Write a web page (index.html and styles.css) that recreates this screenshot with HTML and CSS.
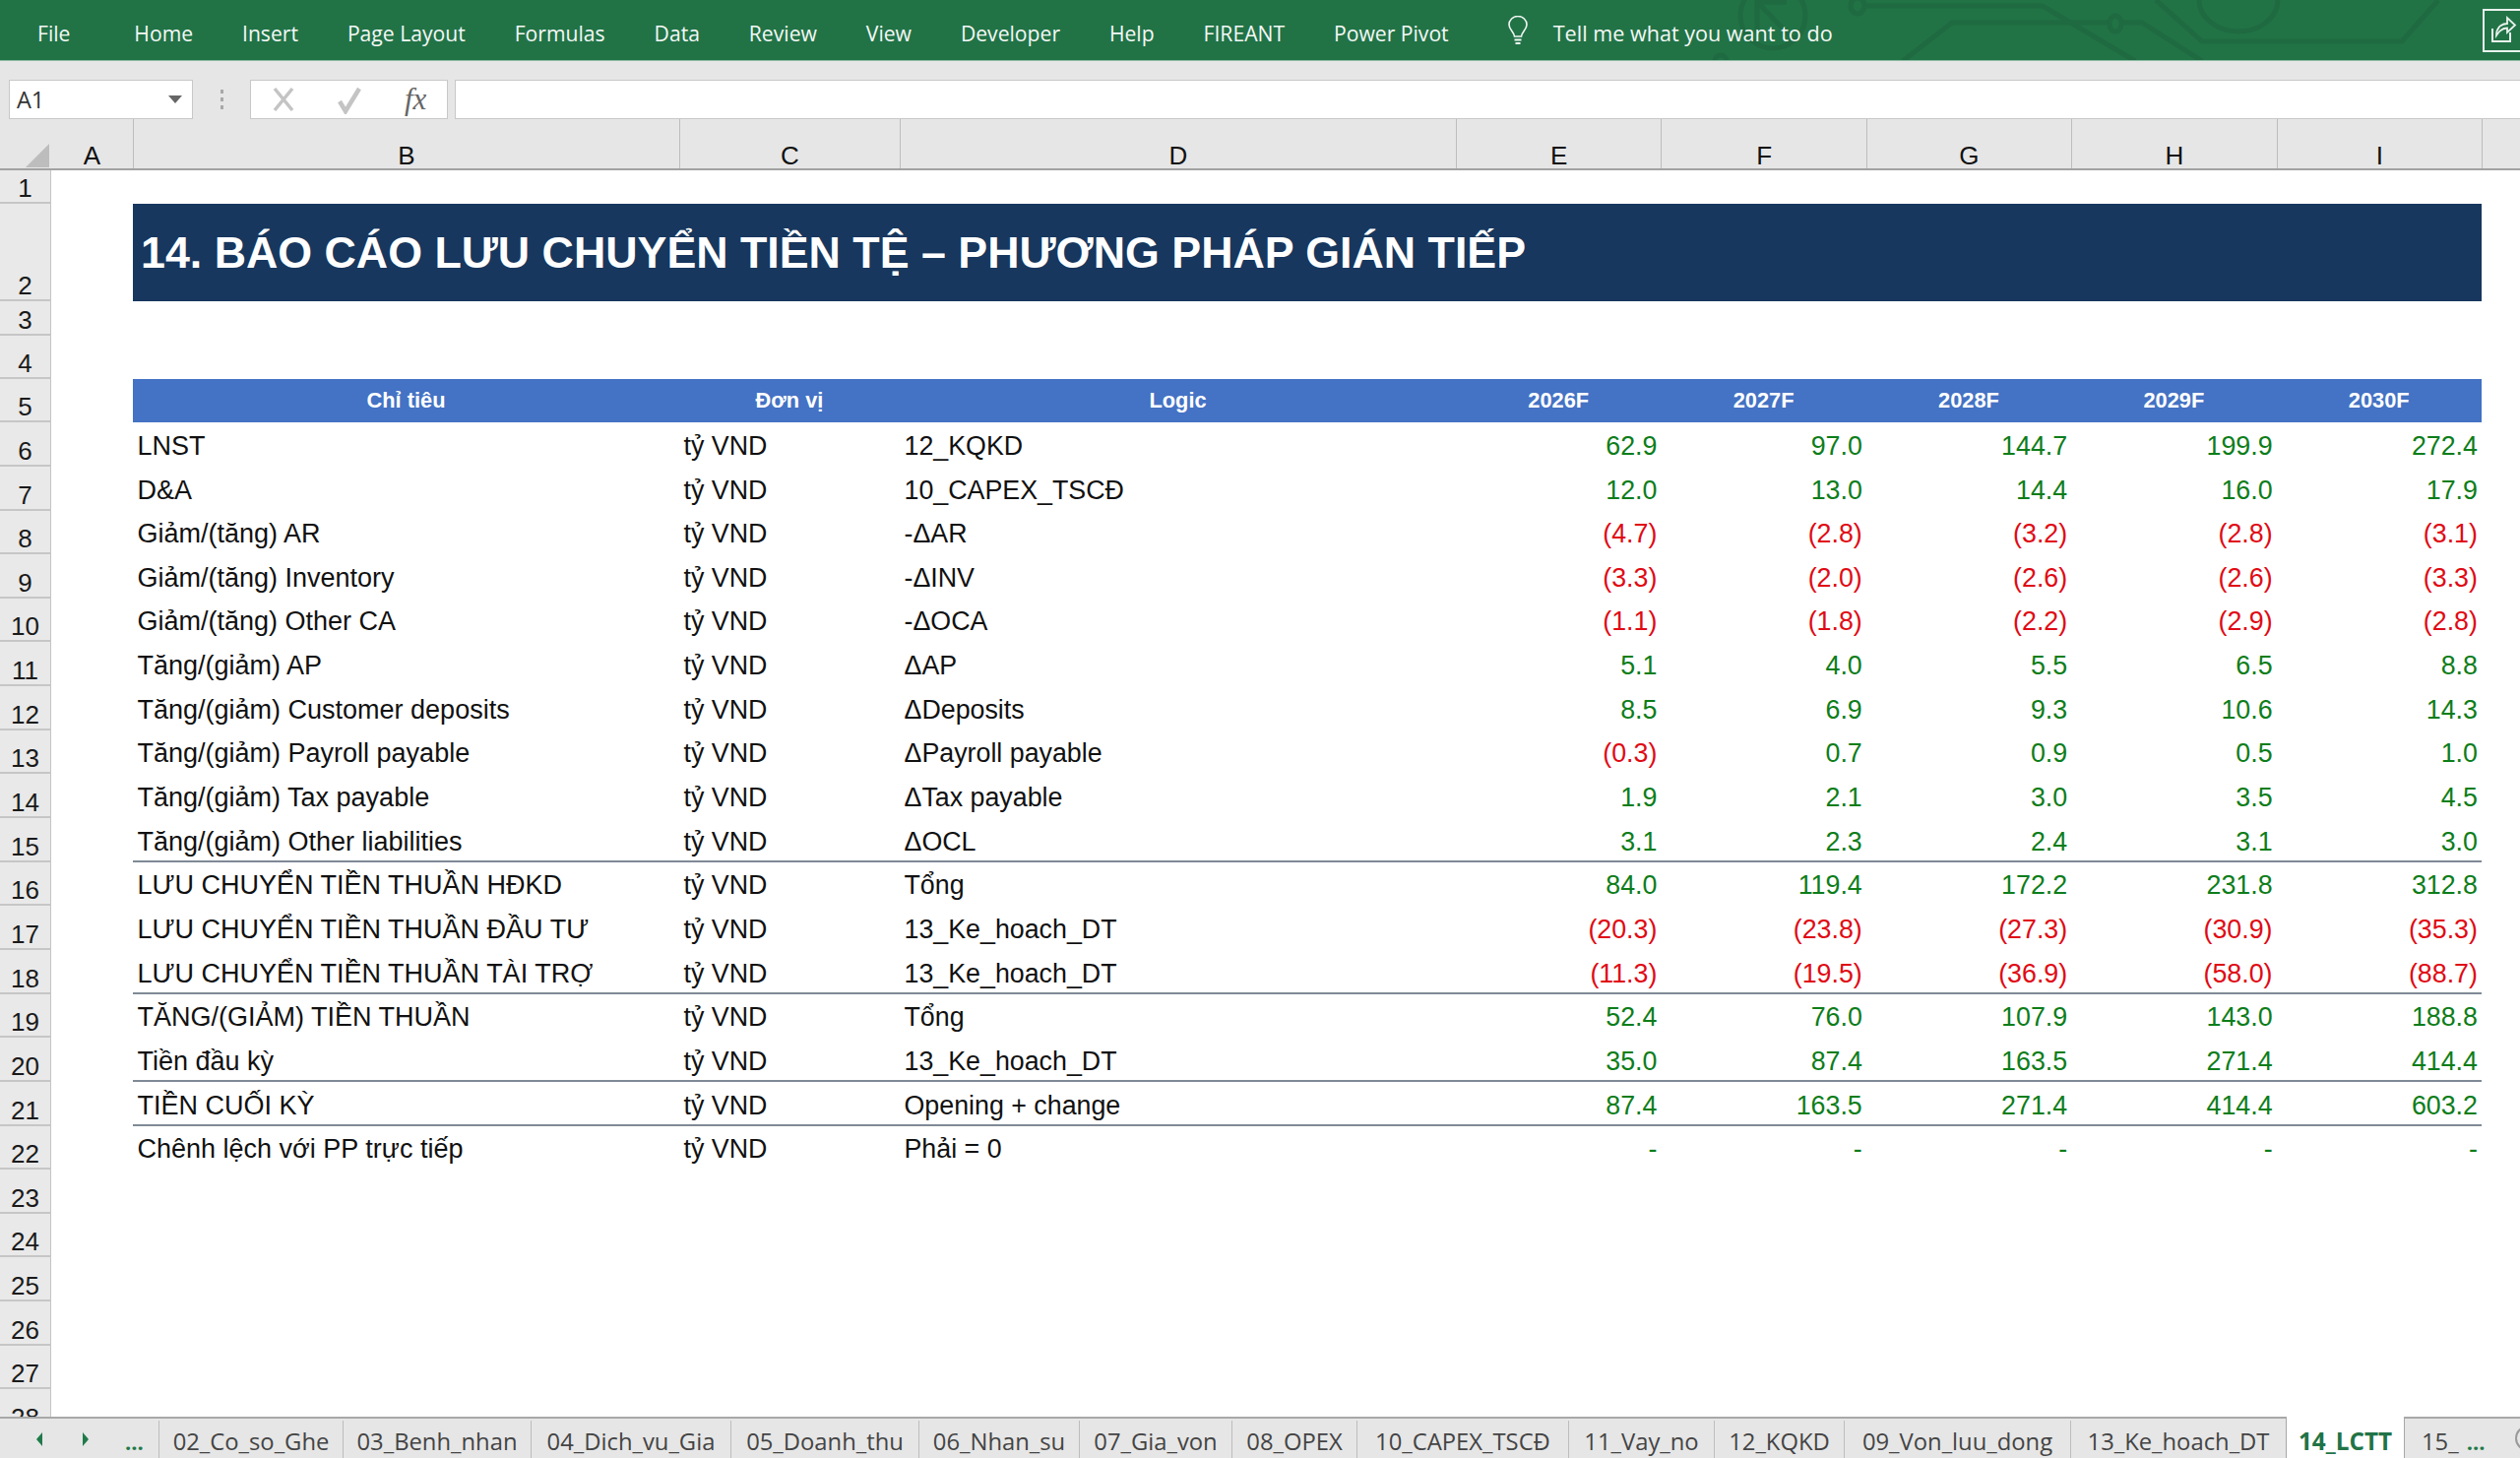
FILE: index.html
```html
<!DOCTYPE html>
<html lang="vi">
<head>
<meta charset="utf-8">
<title>14_LCTT</title>
<link rel="stylesheet" href="styles.css">
</head>
<body>
<div class="app">
  <header class="ribbon">
    <svg class="circuit" viewBox="0 0 2560 62" width="2560" height="62" aria-hidden="true">
      <g fill="none" stroke="#1f6a41" stroke-width="5">
        <circle cx="1801" cy="16" r="33"/>
        <path d="M1785 -4 L1785 34 M1785 2 H1815 M1785 2 L1822 40"/>
        <ellipse cx="1887" cy="6" rx="7" ry="8"/>
        <path d="M1894 6 H2075 L2169 62"/>
        <path d="M1933 62 L1983 23 H2142"/>
        <ellipse cx="2149" cy="24" rx="6" ry="8"/>
        <path d="M2156 23 H2176 L2237 62"/>
        <path d="M2234 0 A40 32 0 0 0 2314 0"/>
        <path d="M2190 0 L2237 42 H2440 L2477 0"/>
        <circle cx="1748" cy="62" r="6"/>
      </g>
    </svg>
    <nav class="menu">
      <span class="menu-item menu-file">File</span>
      <span class="menu-item">Home</span>
      <span class="menu-item">Insert</span>
      <span class="menu-item">Page Layout</span>
      <span class="menu-item">Formulas</span>
      <span class="menu-item">Data</span>
      <span class="menu-item">Review</span>
      <span class="menu-item">View</span>
      <span class="menu-item">Developer</span>
      <span class="menu-item">Help</span>
      <span class="menu-item">FIREANT</span>
      <span class="menu-item">Power Pivot</span>
    </nav>
    <div class="tell">
      <svg class="bulb" viewBox="0 0 24 30" width="24" height="30" aria-hidden="true">
        <path d="M8.5 21 C8 16 3 14 3 9 A9 8.5 0 0 1 21 9 C21 14 16 16 15.5 21 Z" fill="none" stroke="#f2f7f4" stroke-width="1.6"/>
        <path d="M8.5 24.5 H15.5 M9.5 28 H14.5" stroke="#f2f7f4" stroke-width="2"/>
      </svg>
      <span>Tell me what you want to do</span>
    </div>
    <div class="share">
      <svg viewBox="0 0 38 44" width="38" height="44" aria-hidden="true">
        <path d="M10 20 V33 H28 V24" fill="none" stroke="#e9f2ed" stroke-width="2"/>
        <path d="M14 27 C14 20 18 15 25 15 V9 L33 16.500 L25 24 V19.500 C20 19.500 17 22 14 27 Z" fill="none" stroke="#e9f2ed" stroke-width="1.800"/>
      </svg>
    </div>
  </header>

  <section class="formula-bar">
    <div class="name-box"><span>A1</span><i class="caret"></i></div>
    <div class="grip"><i></i><i></i><i></i></div>
    <div class="fx-box">
      <svg viewBox="0 0 24 30" width="24" height="30" aria-hidden="true"><path d="M3 4 L21 26 M21 4 L3 26" stroke="#c4c4c4" stroke-width="3.500"/></svg>
      <svg viewBox="0 0 26 30" width="26" height="30" aria-hidden="true"><path d="M3 17 L9 27 L23 4" fill="none" stroke="#c4c4c4" stroke-width="4.500"/></svg>
      <span class="fx">fx</span>
    </div>
    <div class="formula-input"></div>
  </section>

  <section class="col-headers">
    <div class="corner"><i></i></div>
    <div class="col col-a">A</div>
    <div class="col col-b">B</div>
    <div class="col col-c">C</div>
    <div class="col col-d">D</div>
    <div class="col col-n">E</div>
    <div class="col col-n">F</div>
    <div class="col col-n">G</div>
    <div class="col col-n">H</div>
    <div class="col col-n">I</div>
  </section>

  <main class="sheet">
    <div class="row h1"><div class="rn">1</div></div>
    <div class="row h2"><div class="rn">2</div><div class="gap-a"></div><div class="title">14. BÁO CÁO LƯU CHUYỂN TIỀN TỆ – PHƯƠNG PHÁP GIÁN TIẾP</div></div>
    <div class="row h3"><div class="rn">3</div></div>
    <div class="row h4"><div class="rn">4</div></div>
    <div class="row"><div class="rn">5</div><div class="gap-a"></div><div class="body head"><span>Chỉ tiêu</span><span>Đơn vị</span><span>Logic</span><span>2026F</span><span>2027F</span><span>2028F</span><span>2029F</span><span>2030F</span></div></div>
    <div class="row"><div class="rn">6</div><div class="gap-a"></div><div class="body"><span>LNST</span><span>tỷ VND</span><span>12_KQKD</span><b>62.9</b><b>97.0</b><b>144.7</b><b>199.9</b><b>272.4</b></div></div>
    <div class="row"><div class="rn">7</div><div class="gap-a"></div><div class="body"><span>D&amp;A</span><span>tỷ VND</span><span>10_CAPEX_TSCĐ</span><b>12.0</b><b>13.0</b><b>14.4</b><b>16.0</b><b>17.9</b></div></div>
    <div class="row"><div class="rn">8</div><div class="gap-a"></div><div class="body"><span>Giảm/(tăng) AR</span><span>tỷ VND</span><span>-ΔAR</span><b class="neg">(4.7)</b><b class="neg">(2.8)</b><b class="neg">(3.2)</b><b class="neg">(2.8)</b><b class="neg">(3.1)</b></div></div>
    <div class="row"><div class="rn">9</div><div class="gap-a"></div><div class="body"><span>Giảm/(tăng) Inventory</span><span>tỷ VND</span><span>-ΔINV</span><b class="neg">(3.3)</b><b class="neg">(2.0)</b><b class="neg">(2.6)</b><b class="neg">(2.6)</b><b class="neg">(3.3)</b></div></div>
    <div class="row"><div class="rn">10</div><div class="gap-a"></div><div class="body"><span>Giảm/(tăng) Other CA</span><span>tỷ VND</span><span>-ΔOCA</span><b class="neg">(1.1)</b><b class="neg">(1.8)</b><b class="neg">(2.2)</b><b class="neg">(2.9)</b><b class="neg">(2.8)</b></div></div>
    <div class="row"><div class="rn">11</div><div class="gap-a"></div><div class="body"><span>Tăng/(giảm) AP</span><span>tỷ VND</span><span>ΔAP</span><b>5.1</b><b>4.0</b><b>5.5</b><b>6.5</b><b>8.8</b></div></div>
    <div class="row"><div class="rn">12</div><div class="gap-a"></div><div class="body"><span>Tăng/(giảm) Customer deposits</span><span>tỷ VND</span><span>ΔDeposits</span><b>8.5</b><b>6.9</b><b>9.3</b><b>10.6</b><b>14.3</b></div></div>
    <div class="row"><div class="rn">13</div><div class="gap-a"></div><div class="body"><span>Tăng/(giảm) Payroll payable</span><span>tỷ VND</span><span>ΔPayroll payable</span><b class="neg">(0.3)</b><b>0.7</b><b>0.9</b><b>0.5</b><b>1.0</b></div></div>
    <div class="row"><div class="rn">14</div><div class="gap-a"></div><div class="body"><span>Tăng/(giảm) Tax payable</span><span>tỷ VND</span><span>ΔTax payable</span><b>1.9</b><b>2.1</b><b>3.0</b><b>3.5</b><b>4.5</b></div></div>
    <div class="row"><div class="rn">15</div><div class="gap-a"></div><div class="body ruled"><span>Tăng/(giảm) Other liabilities</span><span>tỷ VND</span><span>ΔOCL</span><b>3.1</b><b>2.3</b><b>2.4</b><b>3.1</b><b>3.0</b></div></div>
    <div class="row"><div class="rn">16</div><div class="gap-a"></div><div class="body"><span>LƯU CHUYỂN TIỀN THUẦN HĐKD</span><span>tỷ VND</span><span>Tổng</span><b>84.0</b><b>119.4</b><b>172.2</b><b>231.8</b><b>312.8</b></div></div>
    <div class="row"><div class="rn">17</div><div class="gap-a"></div><div class="body"><span>LƯU CHUYỂN TIỀN THUẦN ĐẦU TƯ</span><span>tỷ VND</span><span>13_Ke_hoach_DT</span><b class="neg">(20.3)</b><b class="neg">(23.8)</b><b class="neg">(27.3)</b><b class="neg">(30.9)</b><b class="neg">(35.3)</b></div></div>
    <div class="row"><div class="rn">18</div><div class="gap-a"></div><div class="body ruled"><span>LƯU CHUYỂN TIỀN THUẦN TÀI TRỢ</span><span>tỷ VND</span><span>13_Ke_hoach_DT</span><b class="neg">(11.3)</b><b class="neg">(19.5)</b><b class="neg">(36.9)</b><b class="neg">(58.0)</b><b class="neg">(88.7)</b></div></div>
    <div class="row"><div class="rn">19</div><div class="gap-a"></div><div class="body"><span>TĂNG/(GIẢM) TIỀN THUẦN</span><span>tỷ VND</span><span>Tổng</span><b>52.4</b><b>76.0</b><b>107.9</b><b>143.0</b><b>188.8</b></div></div>
    <div class="row"><div class="rn">20</div><div class="gap-a"></div><div class="body ruled"><span>Tiền đầu kỳ</span><span>tỷ VND</span><span>13_Ke_hoach_DT</span><b>35.0</b><b>87.4</b><b>163.5</b><b>271.4</b><b>414.4</b></div></div>
    <div class="row"><div class="rn">21</div><div class="gap-a"></div><div class="body ruled"><span>TIỀN CUỐI KỲ</span><span>tỷ VND</span><span>Opening + change</span><b>87.4</b><b>163.5</b><b>271.4</b><b>414.4</b><b>603.2</b></div></div>
    <div class="row"><div class="rn">22</div><div class="gap-a"></div><div class="body"><span>Chênh lệch với PP trực tiếp</span><span>tỷ VND</span><span>Phải = 0</span><b>-</b><b>-</b><b>-</b><b>-</b><b>-</b></div></div>
    <div class="row"><div class="rn">23</div></div>
    <div class="row"><div class="rn">24</div></div>
    <div class="row"><div class="rn">25</div></div>
    <div class="row"><div class="rn">26</div></div>
    <div class="row"><div class="rn">27</div></div>
    <div class="row"><div class="rn">28</div></div>
  </main>

  <footer class="tabs">
    <div class="tab-nav">
      <svg viewBox="0 0 10 18" width="10" height="18" aria-hidden="true"><path d="M8 2 L2 9 L8 16 Z" fill="#1f7a4a"/></svg>
      <svg viewBox="0 0 10 18" width="10" height="18" aria-hidden="true"><path d="M2 2 L8 9 L2 16 Z" fill="#1f7a4a"/></svg>
      <span class="more">...</span>
    </div>
    <div class="tab">02_Co_so_Ghe</div>
    <div class="tab">03_Benh_nhan</div>
    <div class="tab">04_Dich_vu_Gia</div>
    <div class="tab">05_Doanh_thu</div>
    <div class="tab">06_Nhan_su</div>
    <div class="tab">07_Gia_von</div>
    <div class="tab">08_OPEX</div>
    <div class="tab">10_CAPEX_TSCĐ</div>
    <div class="tab">11_Vay_no</div>
    <div class="tab">12_KQKD</div>
    <div class="tab">09_Von_luu_dong</div>
    <div class="tab">13_Ke_hoach_DT</div>
    <div class="tab active">14_LCTT</div>
    <div class="tab last">15_ <span class="more">...</span><i class="add"></i></div>
  </footer>
</div>
</body>
</html>
```

FILE: styles.css
```css
* { box-sizing: border-box; }
html, body { margin: 0; padding: 0; background: #fff; }
body { width: 2560px; height: 1481px; overflow: hidden; font-family: "Liberation Sans", Arial, sans-serif; }
.app { width: 2560px; height: 1481px; display: flex; flex-direction: column; overflow: hidden; }

/* Ribbon */
.ribbon { position: relative; flex: 0 0 62px; display: flex; align-items: center; background: #217346; border-bottom: 1px solid #8dbba3; color: #f4f8f6; font-family: "Open Sans", sans-serif; font-size: 21.150px; padding-left: 38px; overflow: hidden; }
.circuit { position: absolute; left: 0; top: 0; }
.menu { position: relative; display: flex; gap: 49.900px; margin-top: 6px; }
.menu-file { margin-right: 15px; }
.tell { position: relative; display: flex; align-items: center; gap: 24px; margin-left: 58px; margin-top: 6px; font-size: 21.600px; }
.bulb { display: block; margin-top: -5px; }
.share { position: relative; margin-left: auto; width: 38px; height: 44px; border: 2px solid #e9f2ed; border-right: 0; margin-right: 0; }
.share svg { display: block; margin: -2px 0 0 -2px; }

/* Formula bar */
.formula-bar { flex: 0 0 59px; display: flex; align-items: flex-end; background: #e6e6e6; padding-left: 9px; }
.name-box, .fx-box, .formula-input { height: 40px; background: #fff; border: 1px solid #c8c8c8; }
.name-box { width: 187px; display: flex; align-items: center; justify-content: space-between; padding: 0 10px 0 7px; font-family: "Open Sans", sans-serif; font-size: 23.500px; color: #333; }
.caret { width: 0; height: 0; border-left: 7px solid transparent; border-right: 7px solid transparent; border-top: 8px solid #666; }
.grip { width: 58px; height: 40px; display: flex; flex-direction: column; align-items: center; justify-content: center; gap: 4px; }
.grip i { width: 3px; height: 4px; background: #a8a8a8; }
.fx-box { width: 201px; display: flex; align-items: center; gap: 42px; padding-left: 21px; }
.fx { font-family: "Liberation Serif", serif; font-style: italic; font-size: 31px; color: #666; margin-left: 1px; }
.formula-input { flex: 1; margin-left: 7px; border-right: 0; }

/* Column headers */
.col-headers { flex: 0 0 52px; display: flex; background: #e6e6e6; border-bottom: 2px solid #a2a2a2; }
.corner { position: relative; width: 52px; }
.corner i { position: absolute; left: 26px; top: 25px; width: 24px; height: 24px; background: #bdbdbd; clip-path: polygon(100% 0, 100% 100%, 0 100%); }
.col { height: 50px; padding-top: 23px; display: flex; align-items: center; justify-content: center; font-size: 26px; color: #111; border-right: 1px solid #bdbdbd; line-height: 26px; }
.col-a { width: 84px; }
.col-b { width: 555px; }
.col-c { width: 224px; }
.col-d { width: 565px; }
.col-n { width: 208.400px; }

/* Sheet */
.sheet { flex: 1; min-height: 0; overflow: hidden; }
.row { display: flex; height: 44.650px; }
.h1 { height: 34px; }
.h2 { height: 99px; }
.h3 { height: 34.500px; }
.h4 { height: 44.150px; }
.rn { flex: 0 0 52px; display: flex; align-items: flex-end; justify-content: center; background: #e9e9e9; border-right: 1px solid #c4c4c4; border-bottom: 2px solid #c6c6c6; font-size: 26px; line-height: 27px; color: #1a1a1a; }
.gap-a { flex: 0 0 83px; }
.title { width: 2386px; display: flex; align-items: center; padding-left: 8px; background: #17375e; color: #fff; font-weight: 700; font-size: 44.750px; white-space: nowrap; }
.body { width: 2386px; display: grid; grid-template-columns: 555px 224px 565px repeat(5, 208.400px); align-items: end; font-size: 26.800px; line-height: 30px; color: #111; padding-bottom: 6px; }
.body span { padding-left: 4.500px; white-space: nowrap; }
.body span:first-child { font-size: 27px; }
.body b { font-weight: 400; text-align: right; padding-right: 4px; color: #0d7d1a; }
.body b.neg { color: #e00a14; }
.body.ruled { border-bottom: 2px solid #7f8a96; padding-bottom: 4px; }
.head { background: #4472c4; color: #fff; font-weight: 700; font-size: 21.800px; align-items: center; padding-bottom: 0; }
.head span { padding-left: 0; text-align: center; }
.head span:first-child { font-size: 21.800px; }

/* Sheet tabs */
.tabs { flex: 0 0 42px; display: grid; grid-template-columns: 161px 187px 191px 203px 191px 163px 155px 127px 215px 148px 132px 230px 219px 121px 117px; background: #e6e6e6; border-top: 2px solid #a8a8a8; font-family: "Open Sans", sans-serif; font-size: 23.800px; color: #444; }
.tab-nav { display: flex; align-items: center; padding-left: 35px; gap: 37px; padding-top: 2px; }
.more { color: #1f7a4a; font-weight: 700; font-size: 22px; }
.tab-nav .more { margin-left: -2px; padding-top: 4px; }
.tab { display: flex; align-items: center; justify-content: center; white-space: nowrap; margin-top: 2px; border-left: 1px solid #bdbdbd; height: 38px; line-height: 38px; padding-top: 3px; }
.tab.active { height: 42px; margin-top: -2px; background: #fff; color: #217346; font-weight: 700; font-size: 24.300px; padding-top: 7px; border-left: 1px solid #a8a8a8; border-right: 1px solid #a8a8a8; }
.tab.last { justify-content: flex-start; padding-left: 17px; gap: 8px; border-left: 0; position: relative; }
.add { position: absolute; left: 112px; top: 5px; width: 26px; height: 26px; border: 2px solid #9a9a9a; border-radius: 50%; }
```
